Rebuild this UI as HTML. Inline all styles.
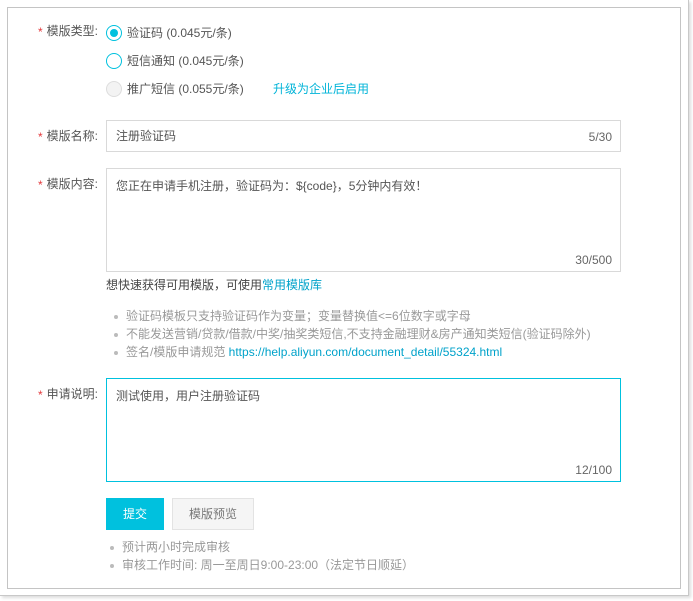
<!DOCTYPE html>
<html><head><meta charset="utf-8"><style>
*{margin:0;padding:0;box-sizing:border-box}
body{width:693px;height:601px;background:#fff;font-family:"Liberation Sans","Noto Sans CJK SC",sans-serif;font-size:12px;color:#333;position:relative;overflow:hidden}
.outer{position:absolute;left:0;top:0;width:689px;height:596px;border-right:1px solid #c8c8c8;border-bottom:1px solid #c8c8c8;box-shadow:2px 2px 3px #ddd}
.inner{position:absolute;left:7px;top:7px;width:674px;height:582px;border:1px solid #c4c4c4;background:#fff}
.a{position:absolute;white-space:nowrap;line-height:16px}
.lab{color:#555;text-align:right;width:60px;left:38px}
.lab b{color:#e4393c;font-weight:normal;position:absolute;left:0;top:1px}
.r{position:absolute;width:16px;height:16px;border-radius:50%;border:1px solid #00c1de;background:#fff;left:106px}
.r.on::after{content:"";position:absolute;left:3px;top:3px;width:8px;height:8px;border-radius:50%;background:#00c1de}
.r.dis{border-color:#ddd;background:#f3f3f3}
.box{position:absolute;left:106px;width:515px;border:1px solid #d9d9d9}
.cnt{position:absolute;right:8px;bottom:4px;color:#666}
.link{color:#00a2ca}
.gray{color:#999}
.dot{position:absolute;width:4px;height:4px;border-radius:50%;background:#bbb}
</style></head><body>
<div class="outer"></div>
<div class="inner"></div>
<div class="a lab" style="top:23px"><b>*</b>模版类型:</div>
<div class="r on" style="top:25px"></div><div class="a" style="left:127px;top:25px;color:#555">验证码 (0.045元/条)</div>
<div class="r" style="top:53px"></div><div class="a" style="left:127px;top:53px;color:#555">短信通知 (0.045元/条)</div>
<div class="r dis" style="top:81px"></div><div class="a" style="left:127px;top:81px;color:#555">推广短信 (0.055元/条)</div>
<div class="a link" style="left:273px;top:81px;color:#00b4d8">升级为企业后启用</div>

<div class="a lab" style="top:128px"><b>*</b>模版名称:</div>
<div class="box" style="top:120px;height:32px"><div class="a" style="left:9px;top:7px;color:#555">注册验证码</div><div class="cnt" style="bottom:7px">5/30</div></div>

<div class="a lab" style="top:176px"><b>*</b>模版内容:</div>
<div class="box" style="top:168px;height:104px"><div class="a" style="left:9px;top:9px;color:#555">您正在申请手机注册，验证码为：${code}，5分钟内有效！</div><div class="cnt">30/500</div></div>

<div class="a" style="left:106px;top:277px;color:#444">想快速获得可用模版，可使用<span class="link">常用模版库</span></div>
<div class="dot" style="left:114px;top:315px"></div><div class="a gray" style="left:126px;top:308px">验证码模板只支持验证码作为变量；变量替换值&lt;=6位数字或字母</div>
<div class="dot" style="left:114px;top:333px"></div><div class="a gray" style="left:126px;top:326px">不能发送营销/贷款/借款/中奖/抽奖类短信,不支持金融理财&amp;房产通知类短信(验证码除外)</div>
<div class="dot" style="left:114px;top:351px"></div><div class="a gray" style="left:126px;top:344px">签名/模版申请规范 <span class="link">https://help.aliyun.com/document_detail/55324.html</span></div>

<div class="a lab" style="top:386px"><b>*</b>申请说明:</div>
<div class="box" style="top:378px;height:104px;border-color:#00c1de"><div class="a" style="left:9px;top:9px;color:#555">测试使用，用户注册验证码</div><div class="cnt">12/100</div></div>

<div class="a" style="left:106px;top:498px;width:58px;height:32px;background:#00c1de;color:#fff;text-align:center;line-height:32px">提交</div>
<div class="a" style="left:172px;top:498px;width:82px;height:32px;background:#f5f5f5;border:1px solid #e3e3e3;color:#777;text-align:center;line-height:30px">模版预览</div>
<div class="dot" style="left:110px;top:546px"></div><div class="a gray" style="left:122px;top:539px">预计两小时完成审核</div>
<div class="dot" style="left:110px;top:564px"></div><div class="a gray" style="left:122px;top:557px">审核工作时间: 周一至周日9:00-23:00（法定节日顺延）</div>
</body></html>
